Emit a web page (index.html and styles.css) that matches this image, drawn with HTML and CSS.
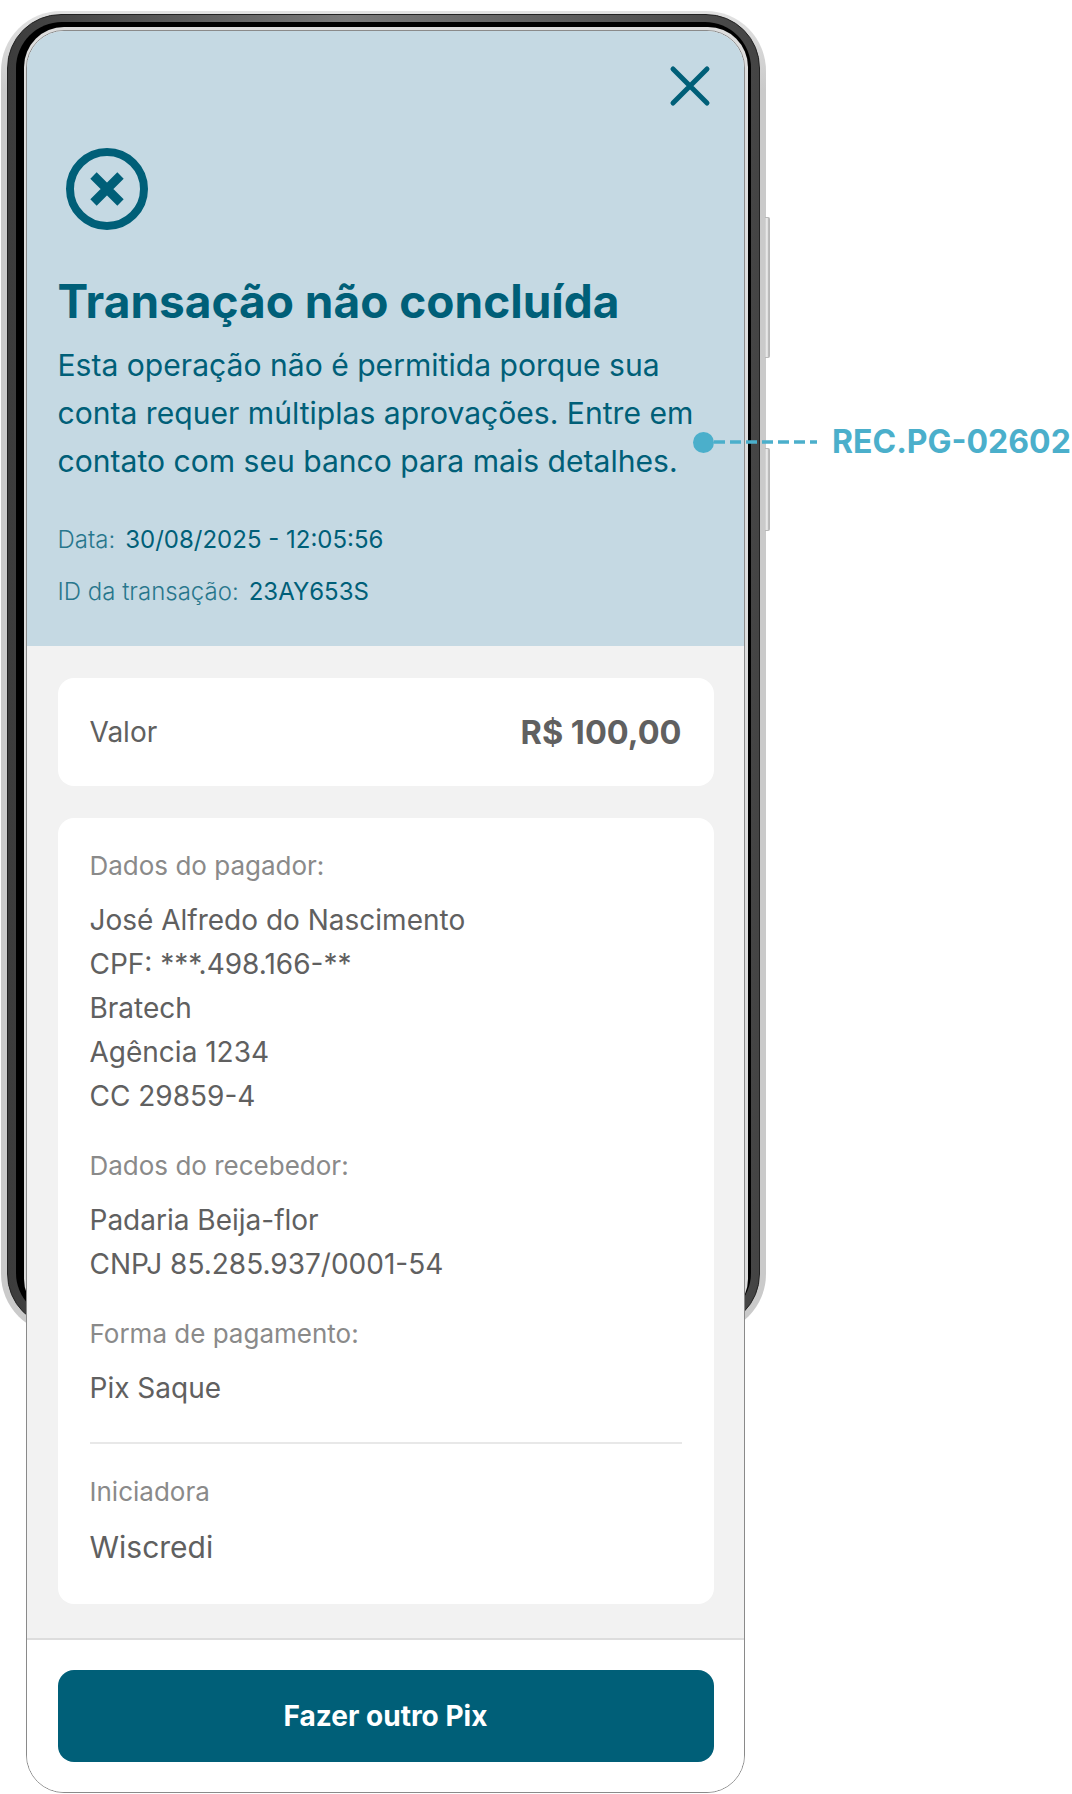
FILE: index.html
```html
<!DOCTYPE html>
<html lang="pt-BR">
<head>
    <meta charset="UTF-8">
    <meta name="viewport" content="width=device-width, initial-scale=1.0">
    <title>Transação não concluída</title>
    <link rel="stylesheet" href="styles.css">
</head>
<body>

    <!-- Device frame, sits behind the screen -->
    <div class="phone">
        <div class="phone-bezel">
            <div class="phone-glass"></div>
        </div>
        <span class="phone-key phone-key-top"></span>
        <span class="phone-key phone-key-bottom"></span>
    </div>

    <main class="screen">
        <section class="hero">
            <div class="hero-top">
                <svg class="icon-close" viewBox="0 0 48 48" aria-label="Fechar">
                    <path d="M7 7L41 41M41 7L7 41"/>
                </svg>
            </div>
            <svg class="icon-status" viewBox="0 0 96 96" aria-hidden="true">
                <circle cx="48" cy="48" r="37"/>
                <path d="M34.500 34.500L61.500 61.500M61.500 34.500L34.500 61.500"/>
            </svg>
            <h1 class="hero-title">Transação não concluída</h1>
            <p class="hero-text">Esta operação não é permitida porque sua conta requer múltiplas aprovações. Entre em contato com seu banco para mais detalhes.</p>
            <div class="meta">
                <div class="meta-row"><span class="meta-label">Data:</span><span>30/08/2025 - 12:05:56</span></div>
                <div class="meta-row"><span class="meta-label">ID da transação:</span><span>23AY653S</span></div>
            </div>
        </section>

        <section class="details">
            <div class="card card-amount">
                <span>Valor</span>
                <strong>R$ 100,00</strong>
            </div>

            <div class="card card-info">
                <div class="info-group">
                    <h2 class="info-label">Dados do pagador:</h2>
                    <p>José Alfredo do Nascimento<br>CPF: ***.498.166-**<br>Bratech<br>Agência 1234<br>CC 29859-4</p>
                </div>
                <div class="info-group">
                    <h2 class="info-label">Dados do recebedor:</h2>
                    <p>Padaria Beija-flor<br>CNPJ 85.285.937/0001-54</p>
                </div>
                <div class="info-group">
                    <h2 class="info-label">Forma de pagamento:</h2>
                    <p>Pix Saque</p>
                </div>
                <div class="divider"></div>
                <div class="info-group info-group-last">
                    <h2 class="info-label">Iniciadora</h2>
                    <p class="info-large">Wiscredi</p>
                </div>
            </div>
        </section>

        <footer class="actions">
            <button class="btn-primary" type="button">Fazer outro Pix</button>
        </footer>
    </main>

    <!-- Annotation over the screen -->
    <div class="callout">
        <span class="callout-dot"></span>
        <svg class="callout-line" viewBox="0 0 103 4" aria-hidden="true">
            <line x1="0" y1="2" x2="103" y2="2"/>
        </svg>
        <span class="callout-code">REC.PG-02602</span>
    </div>

</body>
</html>
```

FILE: styles.css
```css
:root {
    --primary-color: #005f78;
    --hero-color: #c5d9e3;
    --panel-color: #f2f2f2;
    --text-color: #606060;
    --label-color: #8a8a8a;
    --callout-color: #4bafcb;
}

* {
    margin: 0;
    padding: 0;
    box-sizing: border-box;
}

body {
    position: relative;
    width: 1072px;
    height: 1794px;
    padding-top: 30px;
    overflow: hidden;
    font-family: Inter, "Liberation Sans", sans-serif;
    background-color: #fff;
    color: var(--text-color);
}

/* Device frame */
.phone {
    position: absolute;
    top: 11px;
    left: 1px;
    width: 765px;
    height: 1323px;
    padding: 3px 6px 6px;
    border-radius: 60px;
    background: linear-gradient(180deg, #e2e2e2, #cacaca 6%);
}

.phone-bezel {
    height: 100%;
    padding: 7px 8px 8px;
    border: 1px solid #222;
    border-radius: 54px;
    background: linear-gradient(90deg, #3c3c3c, #7a7a7a 45%, #444);
}

.phone-glass {
    position: relative;
    height: 100%;
    overflow: hidden;
    border-radius: 46px;
    background-color: #000;
}

/* thin light edge around the screen */
.phone-glass::after {
    content: "";
    position: absolute;
    top: 5px;
    left: 8px;
    right: 3px;
    bottom: 0;
    border-radius: 40px;
    background-color: #ddd;
}

.phone-key {
    position: absolute;
    left: 764px;
    width: 5px;
    border: 1px solid #b8b8b8;
    border-left: none;
    border-radius: 0 2px 2px 0;
    background: linear-gradient(90deg, #c8c8c8, #f2f2f2 50%, #aaa);
}

.phone-key-top {
    top: 206px;
    height: 141px;
}

.phone-key-bottom {
    top: 437px;
    height: 83px;
}

/* Screen */
.screen {
    position: relative;
    display: flex;
    flex-direction: column;
    width: 719px;
    height: 1763px;
    margin-left: 26px;
    overflow: hidden;
    border: 1.5px solid #8a8a8a;
    border-radius: 38px;
    background-color: #fff;
}

.hero {
    height: 615px;
    padding: 31px 30.5px 0;
    color: var(--primary-color);
    background-color: var(--hero-color);
}

.hero-top {
    display: flex;
    justify-content: flex-end;
    height: 48px;
}

.icon-close {
    width: 48px;
    height: 48px;
    fill: none;
    stroke: var(--primary-color);
    stroke-width: 5;
    stroke-linecap: round;
}

.icon-status {
    display: block;
    width: 96px;
    height: 96px;
    margin-top: 31px;
    margin-left: 1px;
    fill: none;
    stroke: var(--primary-color);
    stroke-width: 8;
}

.icon-status path {
    stroke-width: 9;
}

.hero-title {
    margin-top: 36px;
    font-size: 46px;
    font-weight: 700;
    line-height: 56px;
}

.hero-text {
    margin-top: 12px;
    font-size: 30.100px;
    line-height: 48px;
}

.meta {
    display: flex;
    flex-direction: column;
    gap: 16px;
    margin-top: 37px;
}

.meta-row {
    display: flex;
    gap: 10px;
    font-size: 24px;
    line-height: 36px;
}

.meta-label {
    font-weight: 300;
    opacity: .8;
}

/* Details */
.details {
    flex: 1;
    display: flex;
    flex-direction: column;
    gap: 32px;
    padding: 32px 30.5px 0;
    background-color: var(--panel-color);
}

.card {
    padding: 0 32px;
    border-radius: 16px;
    background-color: #fff;
}

.card-amount {
    display: flex;
    align-items: center;
    justify-content: space-between;
    height: 108px;
    font-size: 28px;
}

.card-amount strong {
    font-size: 32.500px;
    font-weight: 700;
}

.card-info {
    padding-top: 30px;
    padding-bottom: 33px;
}

.info-group {
    margin-bottom: 30px;
    font-size: 28px;
    line-height: 44px;
}

.info-group-last {
    margin-bottom: 0;
}

.info-label {
    margin-bottom: 14px;
    font-size: 26px;
    font-weight: 400;
    line-height: 36px;
    color: var(--label-color);
}

.info-large {
    font-size: 30px;
    line-height: 48px;
}

.info-group-last .info-label {
    margin-bottom: 13px;
}

.divider {
    height: 2px;
    margin: 32px 0 30px;
    background-color: #e8e8e8;
}

/* Footer */
.actions {
    height: 154px;
    padding: 30px 30.5px 0;
    border-top: 2px solid #ddd;
    background-color: #fff;
}

.btn-primary {
    display: block;
    width: 100%;
    height: 92px;
    border: none;
    border-radius: 16px;
    font-family: inherit;
    font-size: 28px;
    font-weight: 700;
    color: #fff;
    background-color: var(--primary-color);
}

/* Annotation */
.callout {
    position: absolute;
    top: 425px;
    left: 693px;
    display: flex;
    align-items: center;
    height: 34px;
}

.callout-dot {
    width: 21px;
    height: 21px;
    border-radius: 50%;
    background-color: var(--callout-color);
}

.callout-line {
    width: 103px;
    height: 4px;
    fill: none;
    stroke: var(--callout-color);
    stroke-width: 3.500;
    stroke-dasharray: 11 5;
}

.callout-code {
    margin-left: 15px;
    font-size: 32px;
    font-weight: 700;
    line-height: 36px;
    white-space: nowrap;
    color: var(--callout-color);
}
```
